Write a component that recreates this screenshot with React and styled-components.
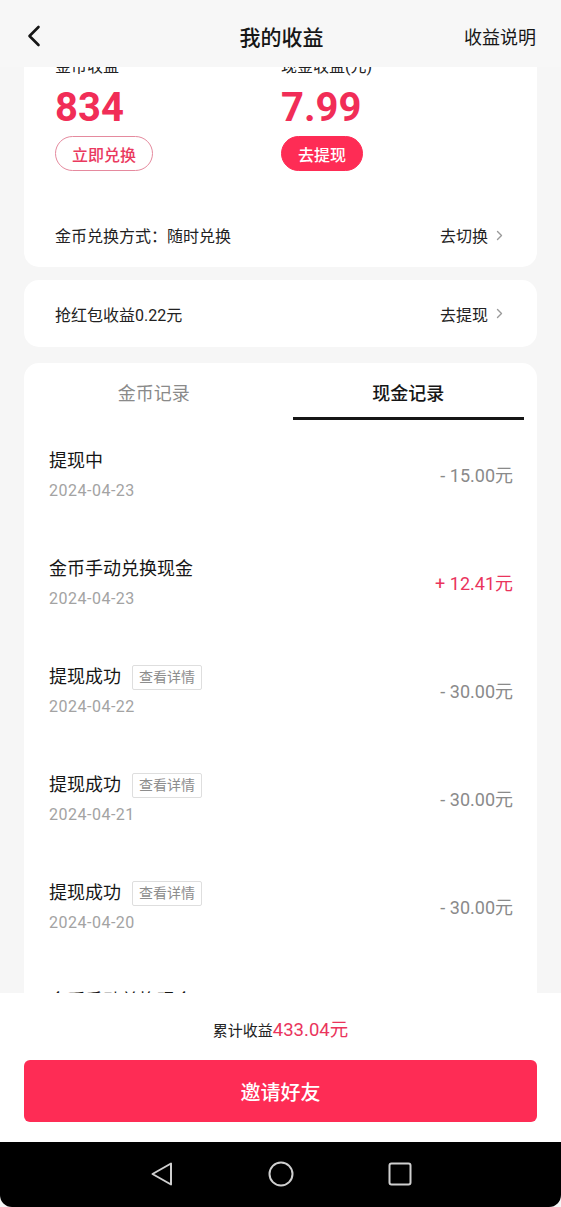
import styled, { createGlobalStyle } from "styled-components";

const GlobalStyle = createGlobalStyle`
  * { box-sizing: border-box; }
  body {
    margin: 0;
    background: #fff;
    font-family: Roboto, "Noto Sans CJK SC", sans-serif;
    color: #161616;
  }
`;

const records = [
  { title: "提现中", date: "2024-04-23", amount: "- 15.00元" },
  { title: "金币手动兑换现金", date: "2024-04-23", amount: "+ 12.41元", plus: true },
  { title: "提现成功", date: "2024-04-22", amount: "- 30.00元", detail: true },
  { title: "提现成功", date: "2024-04-21", amount: "- 30.00元", detail: true },
  { title: "提现成功", date: "2024-04-20", amount: "- 30.00元", detail: true },
  { title: "金币手动兑换现金", date: "2024-04-20", amount: "+ 30.12元", plus: true },
];

const Arrow = () => (
  <svg width="7" height="11" viewBox="0 0 7 11">
    <path d="M1.5 1.5 L5.5 5.5 L1.5 9.5" fill="none" stroke="#9a9a9a" strokeWidth="1.4" strokeLinecap="round" strokeLinejoin="round" />
  </svg>
);

const App = () => {
  return (
    <>
      <GlobalStyle />
      <Page>
        <Header>
          <Back>
            <svg width="14" height="22" viewBox="0 0 14 22">
              <path d="M11.5 2 L2.5 11 L11.5 20" fill="none" stroke="#161616" strokeWidth="2.6" strokeLinecap="round" strokeLinejoin="round" />
            </svg>
          </Back>
          <Title>我的收益</Title>
          <HeaderLink>收益说明</HeaderLink>
        </Header>
        <Scroll>
          <Content>
            <EarnCard>
              <Stats>
                <Stat>
                  <Label>金币收益</Label>
                  <Big>834</Big>
                  <Pill>立即兑换</Pill>
                </Stat>
                <Stat>
                  <Label>现金收益(元)</Label>
                  <Big>7.99</Big>
                  <Pill $filled>去提现</Pill>
                </Stat>
              </Stats>
              <LineRow>
                <span>金币兑换方式：随时兑换</span>
                <Go>
                  去切换 <Arrow />
                </Go>
              </LineRow>
            </EarnCard>
            <SmallCard>
              <span>抢红包收益0.22元</span>
              <Go>
                去提现 <Arrow />
              </Go>
            </SmallCard>
            <ListCard>
              <Tabs>
                <Tab>金币记录</Tab>
                <Tab $active>现金记录</Tab>
              </Tabs>
              {records.map((r, i) => (
                <Item key={i}>
                  <div>
                    <ItemTitle>
                      {r.title}
                      {r.detail && <Detail>查看详情</Detail>}
                    </ItemTitle>
                    <ItemDate>{r.date}</ItemDate>
                  </div>
                  <Amount $plus={r.plus}>{r.amount}</Amount>
                </Item>
              ))}
            </ListCard>
          </Content>
        </Scroll>
        <Footer>
          <Total>
            累计收益<TotalNum>433.04元</TotalNum>
          </Total>
          <Invite>邀请好友</Invite>
        </Footer>
        <NavBar>
          <svg width="24" height="26" viewBox="0 0 24 26">
            <path d="M21 2.5 L21 23.5 L2.5 13 Z" fill="none" stroke="#cfcfcf" strokeWidth="2" strokeLinejoin="round" />
          </svg>
          <svg width="26" height="26" viewBox="0 0 26 26">
            <circle cx="13" cy="13" r="11.5" fill="none" stroke="#cfcfcf" strokeWidth="2" />
          </svg>
          <svg width="24" height="24" viewBox="0 0 24 24">
            <rect x="1.5" y="1.5" width="21" height="21" rx="2" fill="none" stroke="#cfcfcf" strokeWidth="2" />
          </svg>
        </NavBar>
      </Page>
    </>
  );
};

const Page = styled.div`
  height: 1207px;
  display: flex;
  flex-direction: column;
  background: #f6f6f6;
  overflow: hidden;
`;
const Header = styled.div`
  height: 67px;
  flex-shrink: 0;
  display: grid;
  grid-template-columns: 1fr auto 1fr;
  align-items: center;
  padding: 4px 25px 0 27px;
  background: #f7f7f7;
  position: relative;
  z-index: 2;
`;
const Back = styled.div`
  display: flex;
  align-items: center;
`;
const Title = styled.div`
  font-size: 21px;
  font-weight: 500;
`;
const HeaderLink = styled.div`
  justify-self: end;
  font-size: 18px;
`;
const Scroll = styled.div`
  flex: 1;
  overflow: hidden;
  padding: 0 24px;
`;
const Content = styled.div`
  margin-top: -30px;
`;
const Card = styled.div`
  background: #fff;
  border-radius: 15px;
`;
const EarnCard = styled(Card)`
  padding: 19px 34px 0 31px;
`;
const Stats = styled.div`
  display: grid;
  grid-template-columns: 226px 1fr;
`;
const Stat = styled.div`
  display: flex;
  flex-direction: column;
  align-items: flex-start;
`;
const Label = styled.div`
  font-size: 16px;
  line-height: 22px;
  color: #222;
`;
const Big = styled.div`
  margin-top: 7px;
  font-size: 40px;
  line-height: 46px;
  font-weight: 700;
  color: #f12d57;
`;
const Pill = styled.div`
  margin-top: 5px;
  height: 35px;
  padding: 0 16px;
  display: flex;
  align-items: center;
  border-radius: 18px;
  font-size: 16px;
  font-weight: 500;
  border: 1px solid ${(p) => (p.$filled ? "#fe2c55" : "#e58a9e")};
  background: ${(p) => (p.$filled ? "#fe2c55" : "#fff")};
  color: ${(p) => (p.$filled ? "#fff" : "#ea3a5f")};
`;
const LineRow = styled.div`
  margin-top: 32px;
  height: 64px;
  display: flex;
  align-items: center;
  justify-content: space-between;
  font-size: 16px;
  color: #222;
`;
const Go = styled.span`
  display: flex;
  align-items: center;
  gap: 8px;
  font-size: 16px;
  color: #222;
`;
const SmallCard = styled(Card)`
  margin-top: 13px;
  height: 67px;
  padding: 0 34px 0 31px;
  display: flex;
  align-items: center;
  justify-content: space-between;
  font-size: 16px;
  color: #222;
`;
const ListCard = styled(Card)`
  margin-top: 16px;
  padding-bottom: 40px;
`;
const Tabs = styled.div`
  display: flex;
  gap: 23px;
  padding: 0 13px 0 14px;
`;
const Tab = styled.div`
  flex: 1;
  height: 57px;
  padding-top: 19px;
  text-align: center;
  font-size: 18px;
  line-height: 24px;
  font-weight: ${(p) => (p.$active ? 500 : 400)};
  color: ${(p) => (p.$active ? "#161616" : "#8a8a8a")};
  border-bottom: 3px solid ${(p) => (p.$active ? "#161616" : "transparent")};
`;
const Item = styled.div`
  height: 108px;
  padding: 28px 24px 0 25px;
  display: flex;
  justify-content: space-between;
  align-items: flex-start;
`;
const ItemTitle = styled.div`
  display: flex;
  align-items: center;
  gap: 11px;
  font-size: 18px;
  line-height: 26px;
  color: #161616;
`;
const Detail = styled.span`
  height: 25px;
  padding: 0 6px;
  display: flex;
  align-items: center;
  border: 1px solid #dedede;
  border-radius: 2px;
  font-size: 14px;
  color: #8d8d8d;
`;
const ItemDate = styled.div`
  margin-top: 6px;
  font-size: 16px;
  line-height: 22px;
  letter-spacing: 0.5px;
  color: #a3a3a3;
`;
const Amount = styled.div`
  margin-top: 15px;
  font-size: 18px;
  line-height: 26px;
  color: ${(p) => (p.$plus ? "#ea345c" : "#8a8a8a")};
`;
const Footer = styled.div`
  height: 149px;
  flex-shrink: 0;
  background: #fff;
  padding: 25px 24px 0;
  display: flex;
  flex-direction: column;
  align-items: center;
`;
const Total = styled.div`
  font-size: 15px;
  line-height: 24px;
  color: #222;
`;
const TotalNum = styled.span`
  font-size: 18.5px;
  color: #ea345c;
`;
const Invite = styled.div`
  margin-top: 17px;
  width: 100%;
  height: 62px;
  border-radius: 6px;
  background: #fe2c55;
  color: #fff;
  font-size: 20px;
  font-weight: 500;
  display: flex;
  align-items: center;
  justify-content: center;
`;
const NavBar = styled.div`
  height: 65px;
  flex-shrink: 0;
  background: #000;
  border-radius: 0 0 12px 12px;
  display: flex;
  align-items: center;
  justify-content: center;
  gap: 94px;
  padding-bottom: 2px;
`;

export default App;
